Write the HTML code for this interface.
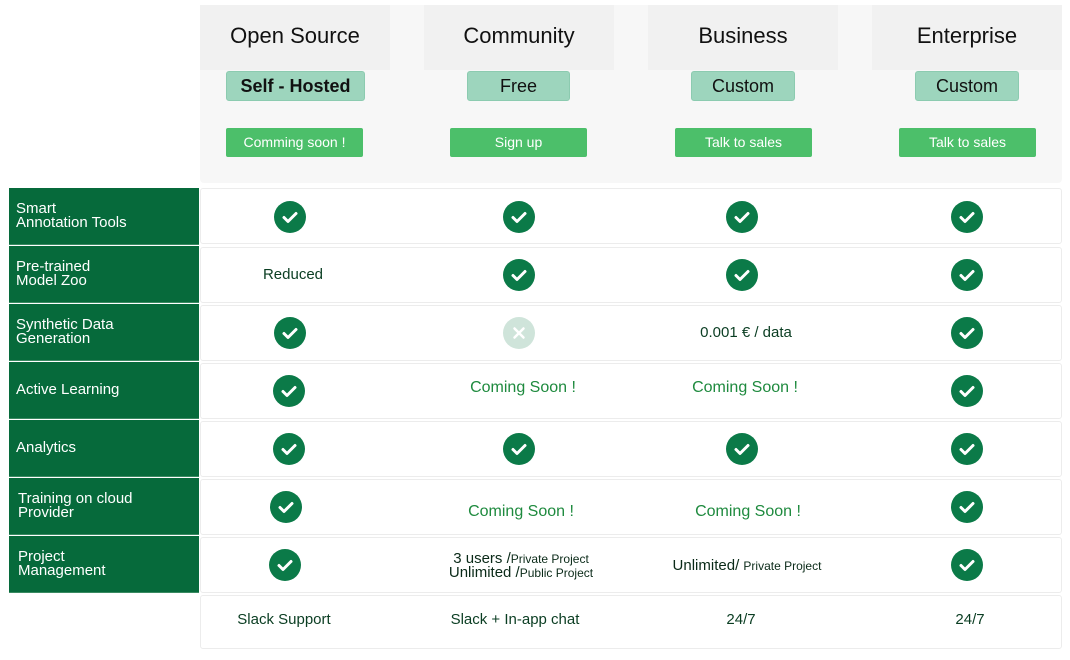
<!DOCTYPE html>
<html><head><meta charset="utf-8"><style>
*{margin:0;padding:0;box-sizing:border-box}
body{width:1070px;height:660px;background:#fff;position:relative;font-family:"Liberation Sans",sans-serif;overflow:hidden}
.a{position:absolute}
.hdr{left:200px;top:5px;width:862px;height:178px;background:#f7f7f7;border-radius:4px}
.tb{top:5px;width:190px;height:65px;background:#f1f1f1;font-size:22px;color:#111;text-align:center;line-height:62px}
.pill{top:71px;height:30px;background:#9dd5bd;border:1px solid #8ccbb0;border-radius:3px;font-size:18px;color:#111;text-align:center;line-height:28px}
.btn{top:128px;height:29px;width:137px;background:#4cbf6a;border-radius:2px;color:#fff;font-size:14px;text-align:center;line-height:28px}
.row{left:200px;width:862px;height:56px;background:#fff;border:1px solid #ececec;border-radius:3px}
.lab{left:9px;width:190px;height:57px;background:#066a3b;color:#fff;font-size:15px;line-height:14px;padding-left:7px;display:flex;align-items:center;border-bottom:1px solid #3a8a62}
.c{width:32px;height:32px;border-radius:50%;background:#0b7a48}
.c svg{display:block}
.x{background:#cfe4da}
.t{font-size:15px;color:#0a3d22;text-align:center;width:220px}
.g{font-size:16px;color:#1e8a3e;text-align:center;width:220px}
small{font-size:12px}
</style></head><body>
<div class="a hdr"></div>
<div class="a tb" style="left:200px">Open Source</div>
<div class="a tb" style="left:424px">Community</div>
<div class="a tb" style="left:648px">Business</div>
<div class="a tb" style="left:872px">Enterprise</div>
<div class="a pill" style="left:226px;width:139px;font-weight:bold">Self - Hosted</div>
<div class="a pill" style="left:467px;width:103px">Free</div>
<div class="a pill" style="left:691px;width:104px">Custom</div>
<div class="a pill" style="left:915px;width:104px">Custom</div>
<div class="a btn" style="left:226px">Comming soon !</div>
<div class="a btn" style="left:450px">Sign up</div>
<div class="a btn" style="left:675px">Talk to sales</div>
<div class="a btn" style="left:899px">Talk to sales</div>

<div class="a row" style="top:188px"></div>
<div class="a row" style="top:247px"></div>
<div class="a row" style="top:305px"></div>
<div class="a row" style="top:363px"></div>
<div class="a row" style="top:421px"></div>
<div class="a row" style="top:479px"></div>
<div class="a row" style="top:537px"></div>
<div class="a row" style="top:595px;height:54px"></div>

<div class="a lab" style="top:188px">Smart<br>Annotation Tools</div>
<div class="a lab" style="top:246px">Pre-trained<br>Model Zoo</div>
<div class="a lab" style="top:304px">Synthetic Data<br>Generation</div>
<div class="a lab" style="top:362px">Active Learning</div>
<div class="a lab" style="top:420px">Analytics</div>
<div class="a lab" style="top:478px;padding-left:9px">Training on cloud<br>Provider</div>
<div class="a lab" style="top:536px;padding-left:9px">Project<br>Management</div>

<svg width="0" height="0" style="position:absolute"><defs><symbol id="ck" viewBox="0 0 32 32"><path d="M10 16.5l4 4 8-8" fill="none" stroke="#fff" stroke-width="3" stroke-linecap="round" stroke-linejoin="round"/></symbol></defs></svg>

<div class="a c" style="left:274px;top:201px"><svg width="32" height="32"><use href="#ck"/></svg></div>
<div class="a c" style="left:503px;top:201px"><svg width="32" height="32"><use href="#ck"/></svg></div>
<div class="a c" style="left:726px;top:201px"><svg width="32" height="32"><use href="#ck"/></svg></div>
<div class="a c" style="left:951px;top:201px"><svg width="32" height="32"><use href="#ck"/></svg></div>

<div class="a t" style="left:183px;top:266px">Reduced</div>
<div class="a c" style="left:503px;top:259px"><svg width="32" height="32"><use href="#ck"/></svg></div>
<div class="a c" style="left:726px;top:259px"><svg width="32" height="32"><use href="#ck"/></svg></div>
<div class="a c" style="left:951px;top:259px"><svg width="32" height="32"><use href="#ck"/></svg></div>

<div class="a c" style="left:274px;top:317px"><svg width="32" height="32"><use href="#ck"/></svg></div>
<div class="a c x" style="left:503px;top:317px"><svg width="32" height="32"><path d="M11.5 11.5l9 9M20.5 11.5l-9 9" stroke="#fff" stroke-width="2.5" stroke-linecap="round"/></svg></div>
<div class="a t" style="left:636px;top:324px">0.001 € / data</div>
<div class="a c" style="left:951px;top:317px"><svg width="32" height="32"><use href="#ck"/></svg></div>

<div class="a c" style="left:273px;top:375px"><svg width="32" height="32"><use href="#ck"/></svg></div>
<div class="a g" style="left:413px;top:379px">Coming Soon !</div>
<div class="a g" style="left:635px;top:379px">Coming Soon !</div>
<div class="a c" style="left:951px;top:375px"><svg width="32" height="32"><use href="#ck"/></svg></div>

<div class="a c" style="left:273px;top:433px"><svg width="32" height="32"><use href="#ck"/></svg></div>
<div class="a c" style="left:503px;top:433px"><svg width="32" height="32"><use href="#ck"/></svg></div>
<div class="a c" style="left:726px;top:433px"><svg width="32" height="32"><use href="#ck"/></svg></div>
<div class="a c" style="left:951px;top:433px"><svg width="32" height="32"><use href="#ck"/></svg></div>

<div class="a c" style="left:270px;top:491px"><svg width="32" height="32"><use href="#ck"/></svg></div>
<div class="a g" style="left:411px;top:503px">Coming Soon !</div>
<div class="a g" style="left:638px;top:503px">Coming Soon !</div>
<div class="a c" style="left:951px;top:491px"><svg width="32" height="32"><use href="#ck"/></svg></div>

<div class="a c" style="left:269px;top:549px"><svg width="32" height="32"><use href="#ck"/></svg></div>
<div class="a t" style="left:411px;top:552px;line-height:14px;color:#0a2a18">3 users /<small>Private Project</small><br>Unlimited /<small>Public Project</small></div>
<div class="a t" style="left:637px;top:557px;color:#0a2a18">Unlimited/ <small>Private Project</small></div>
<div class="a c" style="left:951px;top:549px"><svg width="32" height="32"><use href="#ck"/></svg></div>

<div class="a t" style="left:174px;top:611px">Slack Support</div>
<div class="a t" style="left:405px;top:611px">Slack + In-app chat</div>
<div class="a t" style="left:631px;top:611px">24/7</div>
<div class="a t" style="left:860px;top:611px">24/7</div>
</body></html>
